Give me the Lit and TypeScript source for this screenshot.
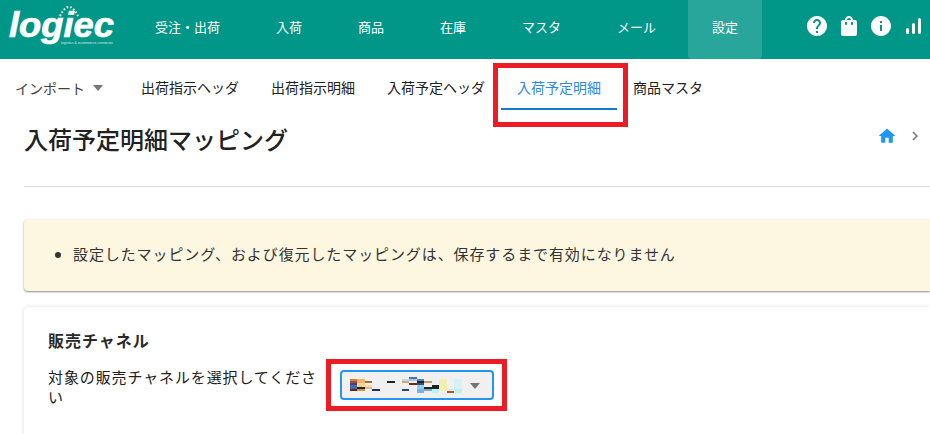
import { LitElement, html, css, svg } from "lit";
import { customElement } from "lit/decorators.js";

const NAV = ["受注・出荷", "入荷", "商品", "在庫", "マスタ", "メール", "設定"];
const TABS = ["出荷指示ヘッダ", "出荷指示明細", "入荷予定ヘッダ", "入荷予定明細", "商品マスタ"];

@customElement("app-root")
export class AppRoot extends LitElement {
  static styles = css`
    :host { display: block; width: 930px; height: 434px; overflow: hidden; position: relative; background: #fff; color: #212121;
      font-family: "Noto Sans CJK JP", "Noto Sans", sans-serif; }
    .bar { height: 59px; background: #009688; display: flex; color: #fff; }
    .logo { width: 131px; flex: none; position: relative; }
    .logo svg { display: block; }
    .nav { display: flex; gap: 8px; }
    .nav div { padding: 0 24px; font-size: 13px; line-height: 53px; height: 59px; box-sizing: border-box; border-radius: 0 0 4px 4px; white-space: nowrap; }
    .nav .on { background: rgba(255,255,255,.16); }
    .icons { margin-left: 43px; display: flex; align-items: center; gap: 8px; height: 52px; }
    .sub { display: flex; height: 58px; align-items: flex-start; padding-left: 15px; font-size: 14px; color: #212121; }
    .imp { display: flex; align-items: center; height: 57px; color: #424242; width: 111px; flex: none; margin-right: -1px; }
    .arrow { margin-left: 8px; width: 0; height: 0; border: 5.5px solid transparent; border-top: 6px solid #757575; border-bottom: 0; }
    .tab { padding: 0 16px; height: 49px; line-height: 57px; white-space: nowrap; }
    .tab.on { color: #2f88e0; border-bottom: 2px solid #1976d2; }
    .head { display: flex; justify-content: space-between; align-items: flex-start; margin: 0 0 0 24px; height: 70px; box-sizing: border-box; border-bottom: 1px solid #e0e0e0; padding-right: 6px; }
    h1 { margin: 0; font-size: 24px; font-weight: 500; line-height: 44px; color: #212121; }
    .crumb { display: flex; align-items: center; gap: 9px; margin-top: 9px; }
    .alert { margin: 32px 0 0 24px; height: 72px; padding-bottom: 3px; box-sizing: border-box; background: #fdf6e0; border-radius: 4px 0 0 4px; box-shadow: 0 1px 2px rgba(0,0,0,.45); display: flex; align-items: center; font-size: 15px; letter-spacing: .9px; color: #333; }
    .alert ul { margin: 0; padding: 0 0 0 49px; }
    .card { margin: 16px 0 0 24px; height: 140px; background: #fff; border-radius: 4px 0 0 4px; box-shadow: 0 0 4px rgba(0,0,0,.14); padding: 21px 0 0 24px; box-sizing: border-box; }
    .card h2 { margin: 0; font-size: 16px; font-weight: 700; letter-spacing: 1px; line-height: 24px; color: #2a2a2a; }
    .row { display: flex; align-items: flex-start; margin-top: 15px; }
    .label { width: 270px; font-size: 15px; letter-spacing: .88px; line-height: 20px; flex: none; color: #212121; }
    .select { margin: 3px 0 0 22px; width: 154px; height: 30px; box-sizing: border-box; border: 2px solid #2196f3; border-radius: 4px; background: #f0f0f0; position: relative; display: flex; align-items: center; }
    .select svg { display: block; }
    .select .caret { position: absolute; right: 12px; top: 11px; width: 0; height: 0; border: 5px solid transparent; border-top: 6px solid #757575; border-bottom: 0; }
    .mark { position: absolute; border: 5px solid #ed1c24; box-sizing: border-box; }
    .m1 { left: 493px; top: 63px; width: 135px; height: 64px; }
    .m2 { left: 326px; top: 359px; width: 181px; height: 52px; }
  `;

  render() {
    const mosaic: [number, number, number, number, string][] = [
      [8,7,7,2,"#c08a45"],[8,9,7,2,"#96552f"],[8,11,7,2,"#70308a"],[8,13,7,4,"#3a6fb0"],[8,17,7,2,"#6e2028"],
      [15,7,8,4,"#f0b46e"],[15,11,8,4,"#f3d48f"],[15,15,8,2,"#222"],[15,17,8,2,"#c89650"],
      [23,9,7,2,"#a56a2c"],[23,13,7,2,"#f3e0a8"],[23,15,7,2,"#f2b76f"],
      [30,17,8,2,"#2a2a60"],[38,7,7,2,"#e2f5f5"],[45,9,8,2,"#222"],
      [60,7,7,2,"#b8dcea"],[60,9,7,2,"#d7a868"],[60,17,7,2,"#2a4478"],
      [67,5,8,2,"#4a74b0"],[67,7,8,2,"#9fd0d8"],[67,11,8,2,"#6e2a24"],
      [75,7,7,2,"#3f8ad8"],[75,9,7,2,"#222"],[75,11,7,2,"#404a80"],[75,13,7,4,"#8fd0ee"],[75,17,7,4,"#70b4e8"],
      [82,9,8,2,"#c89a5a"],[82,15,8,2,"#222"],[82,17,8,2,"#7aa6d8"],
      [90,13,7,4,"#222"],[90,17,7,4,"#b8f2f2"],[97,7,8,12,"#f2f0b0"],
      [105,17,7,2,"#f2e8c0"],[105,19,7,2,"#a85850"],[112,7,8,10,"#d6f2f2"],[112,17,8,4,"#bff0f0"]
    ];
    return html`
      <div class="bar">
        <div class="logo">
          <svg width="131" height="59" viewBox="0 0 131 59">
            <text x="9" y="37" font-family="Liberation Sans" font-weight="700" font-style="italic" font-size="35" fill="#fff" stroke="#fff" stroke-width=".7" textLength="105" lengthAdjust="spacingAndGlyphs">logiec</text>
            <text x="61" y="44" font-family="Liberation Sans" font-size="3" fill="#fff" opacity=".8" textLength="52" lengthAdjust="spacingAndGlyphs">logistics &amp; ecommerce connector</text>
            <path d="M60 16 Q69 -2 78 16" fill="none" stroke="#fff" stroke-width="2" stroke-dasharray="1.6 2"/>
          </svg>
        </div>
        <div class="nav">${NAV.map((n, i) => html`<div class=${i === 6 ? "on" : ""}>${n}</div>`)}</div>
        <div class="icons">
          <svg width="24" height="24" viewBox="0 0 24 24" fill="#fff"><path d="M12 2C6.48 2 2 6.48 2 12s4.48 10 10 10 10-4.48 10-10S17.52 2 12 2zm1 17h-2v-2h2v2zm2.07-7.75l-.9.92C13.45 12.9 13 13.5 13 15h-2v-.5c0-1.1.45-2.1 1.17-2.83l1.24-1.26c.37-.36.59-.86.59-1.41 0-1.1-.9-2-2-2s-2 .9-2 2H8c0-2.21 1.79-4 4-4s4 1.79 4 4c0 .88-.36 1.68-.93 2.25z"/></svg>
          <svg width="24" height="24" viewBox="0 0 24 24" fill="#fff"><path d="M18 6h-2c0-2.21-1.79-4-4-4S8 3.79 8 6H6c-1.1 0-2 .9-2 2v12c0 1.1.9 2 2 2h12c1.1 0 2-.9 2-2V8c0-1.1-.9-2-2-2zm-8 4c0 .55-.45 1-1 1s-1-.45-1-1V8h2v2zm2-6c1.1 0 2 .9 2 2h-4c0-1.1.9-2 2-2zm4 6c0 .55-.45 1-1 1s-1-.45-1-1V8h2v2z"/></svg>
          <svg width="24" height="24" viewBox="0 0 24 24" fill="#fff"><path d="M12 2C6.48 2 2 6.48 2 12s4.48 10 10 10 10-4.48 10-10S17.52 2 12 2zm1 15h-2v-6h2v6zm0-8h-2V7h2v2z"/></svg>
          <svg width="24" height="24" viewBox="0 0 24 24" fill="#fff"><rect x="5" y="14" width="3" height="6" rx="1.5"/><rect x="11" y="9" width="3" height="11" rx="1.5"/><rect x="17" y="4" width="3" height="16" rx="1.5"/></svg>
        </div>
      </div>
      <div class="sub">
        <div class="imp">インポート<span class="arrow"></span></div>
        ${TABS.map((t, i) => html`<div class="tab ${i === 3 ? "on" : ""}">${t}</div>`)}
      </div>
      <div class="head">
        <h1>入荷予定明細マッピング</h1>
        <div class="crumb">
          <svg width="20" height="20" viewBox="0 0 24 24" fill="#2196f3"><path d="M10 20v-6h4v6h5v-8h3L12 3 2 12h3v8z"/></svg>
          <svg width="18" height="18" viewBox="0 0 24 24" fill="#757575"><path d="M10 6L8.59 7.41 13.17 12l-4.58 4.59L10 18l6-6z"/></svg>
        </div>
      </div>
      <div class="alert"><ul><li>設定したマッピング、および復元したマッピングは、保存するまで有効になりません</li></ul></div>
      <div class="card">
        <h2>販売チャネル</h2>
        <div class="row">
          <div class="label">対象の販売チャネルを選択してください</div>
          <div class="select">
            <svg width="130" height="26" viewBox="0 0 130 26">${mosaic.map(([x, y, w, h, c]) => svg`<rect x=${x} y=${y} width=${w} height=${h} fill=${c}></rect>`)}</svg>
            <span class="caret"></span>
          </div>
        </div>
      </div>
      <div class="mark m1"></div>
      <div class="mark m2"></div>
    `;
  }
}
